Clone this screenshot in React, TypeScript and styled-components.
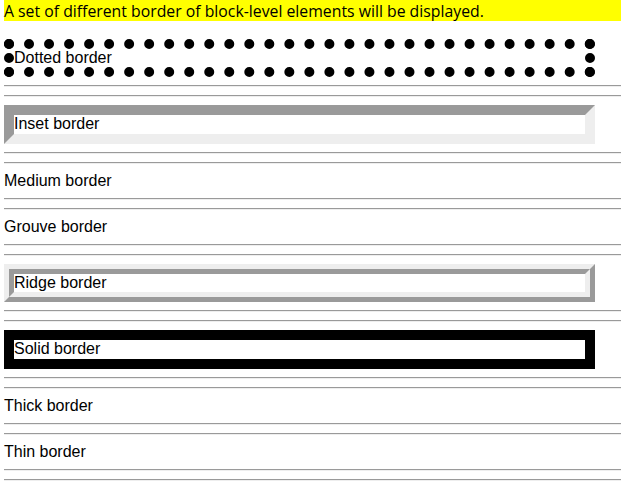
import * as React from "react"
import styled, { createGlobalStyle } from "styled-components"

const GlobalStyle = createGlobalStyle`
  html, body {
    margin: 0;
    padding: 0;
    background: #fff;
  }
`

const Page = styled.div`
  width: 617px;
  margin-left: 4px;
  font: 16px "Liberation Sans", Arial, sans-serif;
  color: #000;
`

const Notice = styled.div`
  background: #ff0;
  height: 21px;
  line-height: 21px;
  margin-bottom: 18px;
  font: 15.8px "Open Sans", "Noto Sans", sans-serif;
  color: #000;
`

const Rule = styled.hr`
  height: 0;
  margin: 8px 0;
  border: none;
  border-top: 1px solid #9a9a9a;
  border-bottom: 1px solid #eeeeee;
`

const Plain = styled.div`
  line-height: 18.3px;
`

const Framed = styled.div`
  width: 571px;
  line-height: 18.3px;
  background: #fff;
`

const Dotted = styled(Framed)`
  border: 10px dotted #000;
`

const Inset = styled(Framed)`
  border: 10px solid;
  border-color: #9a9a9a #eeeeee #eeeeee #9a9a9a;
`

const Solid = styled(Framed)`
  border: 10px solid #000;
`

const RidgeOuter = styled.div`
  width: 581px;
  border: 5px solid;
  border-color: #eeeeee #9a9a9a #9a9a9a #eeeeee;
`

const RidgeInner = styled.div`
  line-height: 18.3px;
  border: 5px solid;
  border-color: #9a9a9a #eeeeee #eeeeee #9a9a9a;
`

function Gap() {
  return (
    <>
      <Rule />
      <Rule />
    </>
  )
}

export default function App() {
  return (
    <>
      <GlobalStyle />
      <Page>
        <Notice>A set of different border of block-level elements will be displayed.</Notice>
        <Dotted>Dotted border</Dotted>
        <Gap />
        <Inset>Inset border</Inset>
        <Gap />
        <Plain>Medium border</Plain>
        <Gap />
        <Plain>Grouve border</Plain>
        <Gap />
        <RidgeOuter>
          <RidgeInner>Ridge border</RidgeInner>
        </RidgeOuter>
        <Gap />
        <Solid>Solid border</Solid>
        <Gap />
        <Plain>Thick border</Plain>
        <Gap />
        <Plain>Thin border</Plain>
        <Gap />
      </Page>
    </>
  )
}
